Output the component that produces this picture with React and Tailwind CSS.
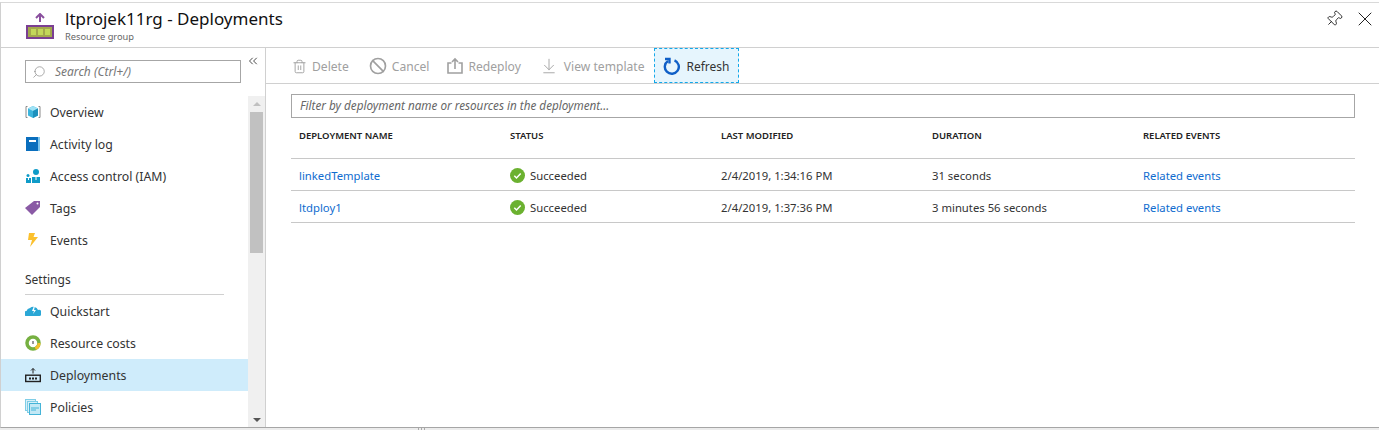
import React from 'react';
import { Search, ChevronsLeft, Trash2, Ban, ArrowDownToLine, Pin, X } from 'lucide-react';

const font = 'font-["Noto_Sans","Open_Sans",sans-serif]';

// Sidebar icons
const CubeIcon = () => (
  <svg width="16" height="16" viewBox="0 0 16 16">
    <path d="M2.500 2.500H1v11h1.500M13.500 2.500H15v11h-1.500" fill="none" stroke="#8a8a8a" strokeWidth="1" />
    <path d="M8 2l5 2.500v7L8 14l-5-2.500v-7z" fill="#3bb4dc" />
    <path d="M8 2l5 2.500L8 7 3 4.500z" fill="#9fe2f5" />
    <path d="M8 7l5-2.500v7L8 14z" fill="#1c90bd" />
  </svg>
);
const LogIcon = () => (
  <svg width="16" height="16" viewBox="0 0 16 16">
    <rect x="1" y="1" width="13" height="14" fill="#0a6ebd" />
    <rect x="13" y="1" width="2" height="14" fill="#7cc4ec" />
    <rect x="4" y="4" width="7" height="2" fill="#fff" />
  </svg>
);
const IamIcon = () => (
  <svg width="16" height="16" viewBox="0 0 16 16">
    <circle cx="11" cy="4" r="3" fill="#0f9bc8" />
    <path d="M7 9h8v6H7z" fill="#0f9bc8" />
    <circle cx="3" cy="7.500" r="1.500" fill="#0f9bc8" />
    <path d="M1 10h5v5H1z" fill="#0f9bc8" />
    <path d="M3.500 10v2M11 9v3" stroke="#fff" />
  </svg>
);
const TagIcon = () => (
  <svg width="16" height="16" viewBox="0 0 16 16">
    <path d="M9 1h6v6l-8 8-7-7z" fill="#8a5aa5" />
    <circle cx="12.500" cy="3.500" r="1" fill="#fff" />
  </svg>
);
const BoltIcon = () => (
  <svg width="16" height="16" viewBox="0 0 16 16">
    <path d="M4 1h6L8.500 5H13L5 15l2-7H3z" fill="#fbc02d" />
  </svg>
);
const CloudIcon = () => (
  <svg width="16" height="16" viewBox="0 0 16 16">
    <path d="M1.500 13a2.500 2.500 0 0 1 0-5 4 4 0 0 1 3.500-3 5 5 0 0 1 8 2 3 3 0 0 1 1.500 6z" fill="#2aa7d6" />
    <path d="M9 3L7 8h2l-1 3 3-4H9l1-4z" fill="#fff" />
  </svg>
);
const CostIcon = () => (
  <svg width="16" height="16" viewBox="0 0 16 16">
    <circle cx="8" cy="8" r="6" fill="#fff" stroke="#76b041" strokeWidth="3.500" />
    <path d="M15.500 8A7.500 7.500 0 0 1 11 15l-1.300-2.800A4.500 4.500 0 0 0 12.500 8z" fill="#f5c02c" />
    <path d="M8 6v3" stroke="#555" strokeWidth="1.200" />
  </svg>
);
const DeployIcon = () => (
  <svg width="16" height="16" viewBox="0 0 16 15">
    <path d="M8 1v5M6 3l2-2 2 2" fill="none" stroke="#222" strokeWidth="1" />
    <rect x="0.700" y="7.700" width="14.600" height="6.300" fill="none" stroke="#222" strokeWidth="1.400" />
    {[4, 7, 10].map((x) => (
      <rect key={x} x={x} y="10" width="2" height="2" fill="#222" />
    ))}
  </svg>
);
const ResourceGroupIcon = () => (
  <svg width="28" height="26" viewBox="0 0 28 26">
    <path d="M14 1v8M10 5l4-4 4 4" fill="none" stroke="#8a4f9e" strokeWidth="2" />
    <rect y="12" width="28" height="14" fill="#7b3f92" />
    <rect x="2" y="14" width="24" height="10" fill="#a3a84c" />
    {[5, 12, 19].map((x) => (
      <rect key={x} x={x} y="16" width="5" height="6" fill="#c3d75a" />
    ))}
  </svg>
);
const PolicyIcon = () => (
  <svg width="16" height="16" viewBox="0 0 16 16">
    <rect x="0.500" y="0.500" width="10" height="11" fill="#d7f0f9" stroke="#7fcde6" />
    <rect x="2.500" y="2.500" width="10" height="11" fill="#d7f0f9" stroke="#7fcde6" />
    <rect x="4.500" y="4.500" width="11" height="11" fill="#c3e8f5" stroke="#45b4d8" />
    <path d="M6 9h8M6 11h5" stroke="#45b4d8" />
  </svg>
);
const RedeployIcon = () => (
  <svg width="18" height="18" viewBox="0 0 18 18" fill="none" stroke="#a0a0a0" strokeWidth="1.600" className="mr-[4px]">
    <path d="M5.500 6H2v10h14V6h-3.500M9 12V2M6 5l3-3 3 3" />
  </svg>
);
const RefreshIcon = () => (
  <svg width="18" height="18" viewBox="0 0 18 18" fill="none" stroke="#0f5fc7" strokeWidth="2.400">
    <path d="M11.500 3.300a7 7 0 1 1-6.500 .6" />
    <path d="M2 2h4.500v4.500" />
  </svg>
);
const CheckCircle = () => (
  <svg width="15" height="15" viewBox="0 0 15 15" className="-mt-[2px]">
    <circle cx="7.500" cy="7.500" r="7.500" fill="#6bb130" />
    <path d="M4.300 7.800l2.200 2.200 4.200-4.400" fill="none" stroke="#fff" strokeWidth="1.500" />
  </svg>
);

const NavItem = ({ icon, label, active }) => (
  <div className={`flex h-8 items-center pl-[24px] text-[12.300px] text-[#333] ${active ? 'bg-[#cfecfb]' : ''}`}>
    <span className="flex w-[25px] shrink-0 items-center">{icon}</span>
    <span className="pt-[2px]">{label}</span>
  </div>
);

const ToolbarButton = ({ icon, label, className = '' }) => (
  <div className={`flex items-center text-[12.100px] text-[#a0a0a0] ${className}`}>
    {icon}
    <span className="pt-[2px]">{label}</span>
  </div>
);

const rows = [
  { name: 'linkedTemplate', modified: '2/4/2019, 1:34:16 PM', duration: '31 seconds' },
  { name: 'ltdploy1', modified: '2/4/2019, 1:37:36 PM', duration: '3 minutes 56 seconds' },
];

const gridCols = 'grid grid-cols-[211px_211px_211px_211px_1fr] pl-2';

export default function App() {
  return (
    <div className={`${font} flex h-[430px] w-[1379px] flex-col overflow-hidden bg-white pt-[2px]`}>
      {/* blade frame */}
      <div className="flex h-[426px] shrink-0 flex-col border-y border-l border-t-[#d9d9d9] border-b-[#a6a6a6] border-l-[#d0d0d0]">
        {/* header */}
        <div className="flex h-[45px] shrink-0 items-start border-b border-[#d0d0d0]">
          <div className="ml-[25px] mt-[10px] w-[28px] shrink-0">
            <ResourceGroupIcon />
          </div>
          <div className="ml-[11px] min-w-0 flex-1">
            <div className="mt-[3px] text-[17px] leading-[25px] text-[#111]">ltprojek11rg - Deployments</div>
            <div className="text-[9.300px] leading-[12px] text-[#666]">Resource group</div>
          </div>
          <div className="mr-[2px] mt-[4px] flex items-center gap-[10px]">
            <Pin size={18} strokeWidth={1.200} className="rotate-45 text-[#222]" />
            <X size={24} strokeWidth={1} className="text-[#222]" />
          </div>
        </div>

        <div className="flex min-h-0 flex-1">
          {/* sidebar */}
          <div className="flex w-[265px] shrink-0 flex-col border-r border-[#d0d0d0]">
            <div className="flex h-[48px] shrink-0 items-start">
              <div className="ml-[24px] mt-[12px] flex h-[23px] w-[216px] items-center border border-[#a6a6a6] pl-[6px] text-[12px] italic text-[#777]">
                <Search size={14} strokeWidth={1.200} className="mr-[9px] -scale-x-100 text-[#888]" />
                Search (Ctrl+/)
              </div>
              <ChevronsLeft size={14} strokeWidth={1.500} className="ml-[5px] mt-[6px] text-[#333]" />
            </div>
            <div className="flex min-h-0 flex-1">
              <div className="min-w-0 flex-1">
                <NavItem icon={<CubeIcon />} label="Overview" />
                <NavItem icon={<LogIcon />} label="Activity log" />
                <NavItem icon={<IamIcon />} label="Access control (IAM)" />
                <NavItem icon={<TagIcon />} label="Tags" />
                <NavItem icon={<BoltIcon />} label="Events" />
                <div className="mx-[24px] flex h-[39px] items-end border-b border-[#d0d0d0] pb-[6px] text-[12px] leading-4 text-[#333]">
                  Settings
                </div>
                <NavItem icon={<CloudIcon />} label="Quickstart" />
                <NavItem icon={<CostIcon />} label="Resource costs" />
                <NavItem icon={<DeployIcon />} label="Deployments" active />
                <NavItem icon={<PolicyIcon />} label="Policies" />
              </div>
              {/* scrollbar */}
              <div className="flex w-[17px] shrink-0 flex-col items-center bg-[#f0f0f0] pt-[6px]">
                <div className="mb-[6px] h-0 w-0 border-x-[4px] border-b-[4px] border-x-transparent border-b-[#c0c0c0]" />
                <div className="h-[141px] w-[13px] bg-[#c1c1c1]" />
                <div className="mb-[5px] mt-auto h-0 w-0 border-x-[4px] border-t-[4px] border-x-transparent border-t-[#555]" />
              </div>
            </div>
          </div>

          {/* content */}
          <div className="min-w-0 flex-1">
            <div className="flex h-9 items-center border-b border-[#d0d0d0] pl-[26px] pt-[2px]">
              <ToolbarButton icon={<Trash2 size={15} strokeWidth={1.500} className="mr-[5px]" />} label="Delete" />
              <ToolbarButton className="ml-[20px]" icon={<Ban size={18} strokeWidth={2.200} className="mr-[5px]" />} label="Cancel" />
              <ToolbarButton className="ml-[17px]" icon={<RedeployIcon />} label="Redeploy" />
              <ToolbarButton className="ml-[19px]" icon={<ArrowDownToLine size={18} strokeWidth={1.200} className="mr-[6px]" />} label="View template" />
              <div className="-mt-[2px] ml-[10px] flex h-[35px] items-center gap-[5px] border border-dashed border-[#14a8ea] bg-[#e6f5fd] pl-[8px] pr-[8px] text-[12px] text-[#333]">
                <RefreshIcon />
                <span className="pt-[3px]">Refresh</span>
              </div>
            </div>

            <div className="pl-[25px] pr-[24px] pt-[10px]">
              <div className="flex h-[24px] items-center border border-[#a6a6a6] pl-2 text-[11.700px] italic text-[#666]">
                Filter by deployment name or resources in the deployment...
              </div>
              <div className={`${gridCols} h-[41px] items-start border-b border-[#c8c8c8] pt-[11px] text-[9.500px] font-semibold leading-[14px] text-[#222]`}>
                <div>DEPLOYMENT NAME</div>
                <div>STATUS</div>
                <div>LAST MODIFIED</div>
                <div>DURATION</div>
                <div>RELATED EVENTS</div>
              </div>
              {rows.map((row) => (
                <div key={row.name} className={`${gridCols} h-8 items-center border-b border-[#c8c8c8] pt-[3px] text-[11.300px] text-[#333]`}>
                  <div className="text-[#0f6ccf]">{row.name}</div>
                  <div className="flex items-center gap-[5px]">
                    <CheckCircle />
                    Succeeded
                  </div>
                  <div>{row.modified}</div>
                  <div>{row.duration}</div>
                  <div className="text-[#0f6ccf]">Related events</div>
                </div>
              ))}
            </div>
          </div>
        </div>
      </div>
      {/* strip under the blade, with the resize grip */}
      <div className="flex flex-1 items-start gap-[2px] bg-[#ececec] pl-[418px]">
        <div className="h-[2px] w-px bg-[#aaaaaa]" />
        <div className="h-[2px] w-px bg-[#aaaaaa]" />
        <div className="h-[2px] w-px bg-[#aaaaaa]" />
      </div>
    </div>
  );
}
